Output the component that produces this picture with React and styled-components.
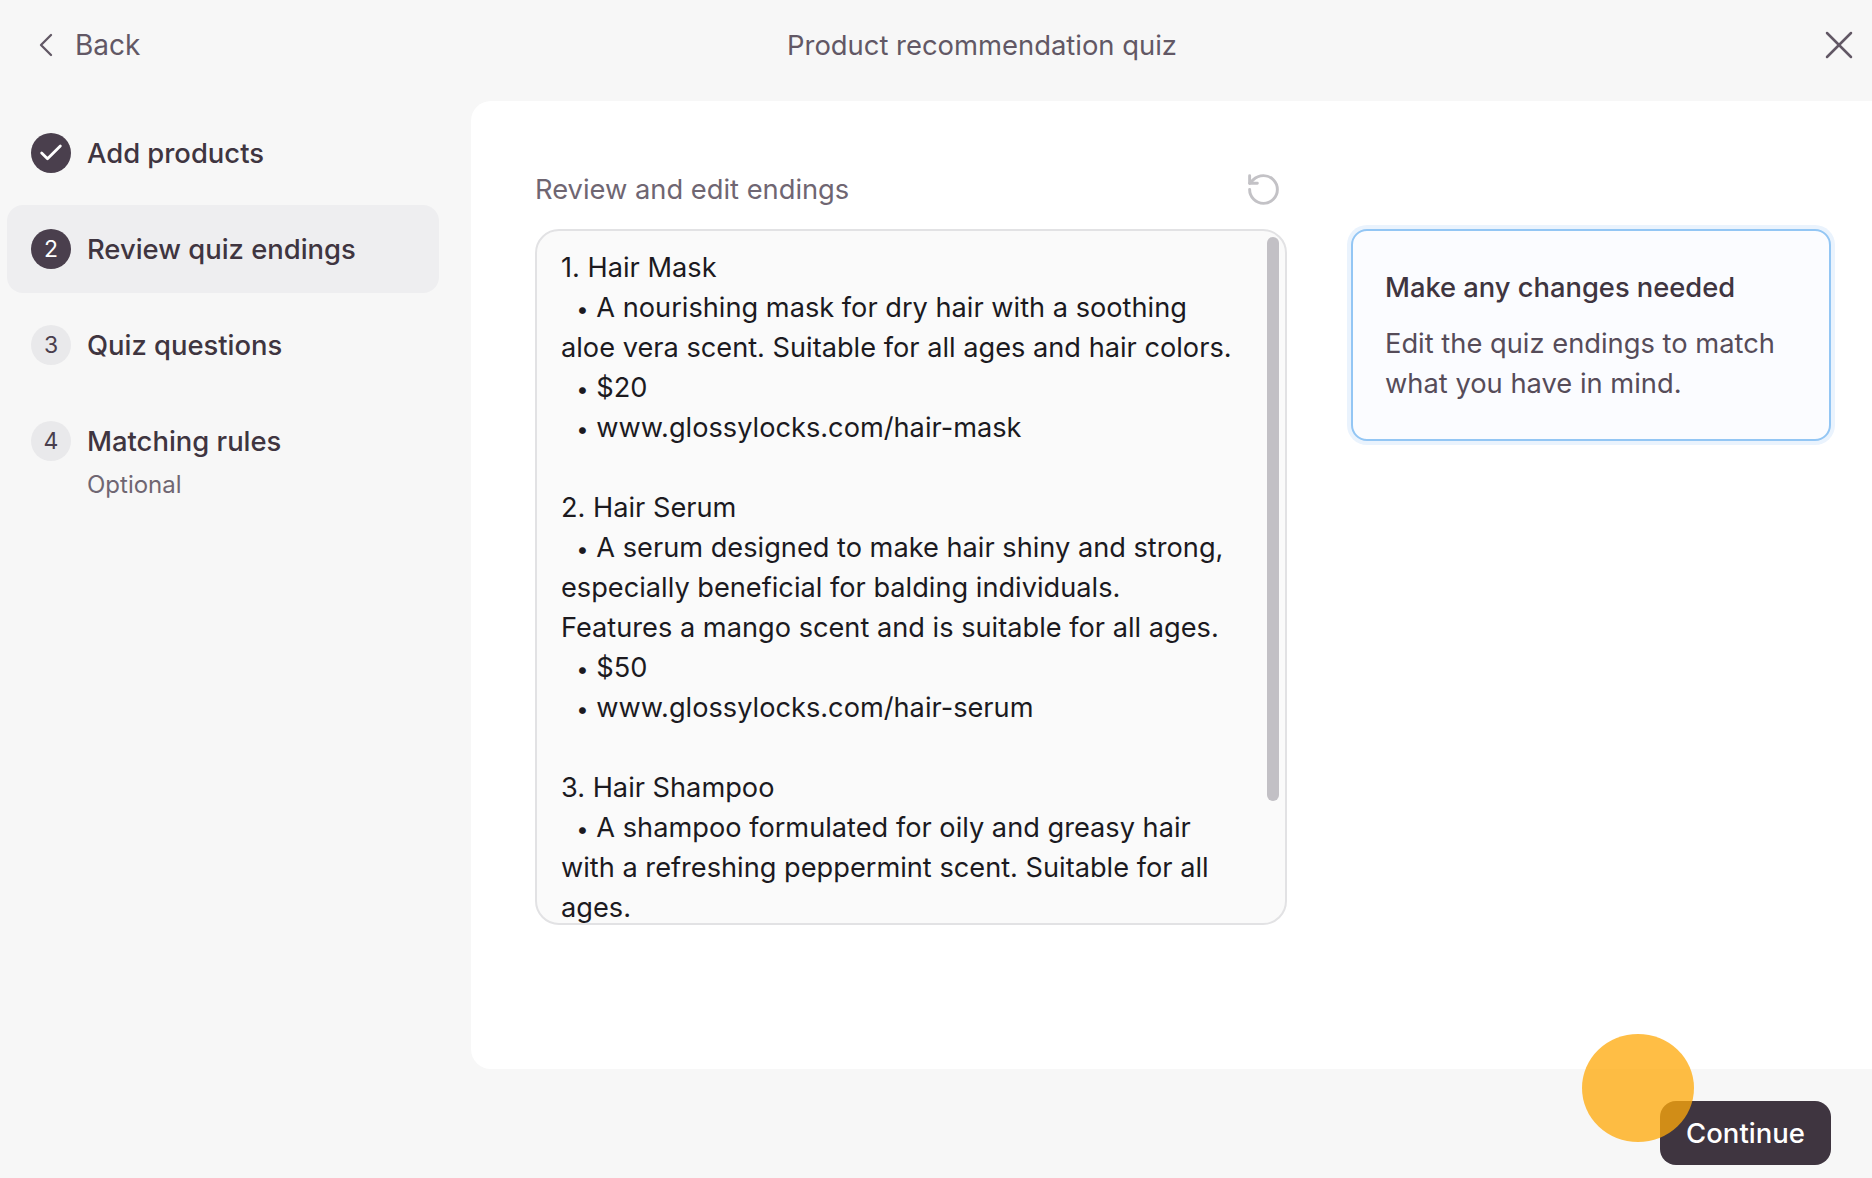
import React from 'react';
import styled, { createGlobalStyle } from 'styled-components';
import { Check, ChevronLeft, RotateCcw, X } from 'lucide-react';

const GlobalStyle = createGlobalStyle`
  html, body {
    margin: 0;
    padding: 0;
    background: #f7f7f7;
  }
  * {
    box-sizing: border-box;
  }
`;

const Page = styled.div`
  position: relative;
  width: 1872px;
  height: 1178px;
  overflow: hidden;
  display: grid;
  grid-template-columns: 471px 1fr;
  grid-template-rows: 101px 968px 109px;
  font-family: Inter, "Liberation Sans", sans-serif;
  color: #3f3540;
`;

const Header = styled.header`
  grid-column: 1 / 3;
  display: grid;
  grid-template-columns: 1fr 390px 686px;
  align-items: center;
  padding: 0 9px 11px 26px;
`;

const BackLink = styled.a`
  display: flex;
  align-items: center;
  gap: 9px;
  font-size: 28px;
  color: #625865;
`;

const Title = styled.div`
  font-size: 27.4px;
  color: #625865;
  text-align: center;
  white-space: nowrap;
`;

const CloseBtn = styled.button`
  justify-self: end;
  display: flex;
  padding: 0;
  border: 0;
  background: none;
  color: #625865;
`;

const Sidebar = styled.nav`
  display: flex;
  flex-direction: column;
  gap: 8px;
  padding: 8px 32px 0 7px;
`;

const Step = styled.div`
  display: flex;
  gap: 16px;
  padding: 24px;
  height: 88px;
  border-radius: 16px;
  background: ${props => (props.$active ? '#eeeef0' : 'transparent')};
`;

const Badge = styled.div`
  flex: none;
  width: 40px;
  height: 40px;
  border-radius: 50%;
  display: flex;
  align-items: center;
  justify-content: center;
  font-size: 23px;
  background: ${props => (props.$done ? '#4a3f4d' : '#e9e9eb')};
  color: ${props => (props.$done ? '#fff' : '#4a3f4d')};
`;

const StepLabel = styled.div`
  font-size: 27.4px;
  line-height: 40px;
  font-weight: 450;
  color: #3f3540;
  white-space: nowrap;
`;

const StepHint = styled.div`
  margin-top: 8px;
  font-size: 24px;
  line-height: 32px;
  color: #6f6672;
`;

const Panel = styled.main`
  background: #fff;
  border-radius: 20px 0 0 20px;
  display: grid;
  grid-template-columns: 752px 480px;
  column-gap: 64px;
  grid-template-rows: 128px 696px;
  padding-left: 64px;
`;

const FieldHead = styled.div`
  display: flex;
  align-items: flex-end;
  justify-content: space-between;
  padding: 0 5px 19px 0;
`;

const FieldLabel = styled.div`
  font-size: 27.3px;
  line-height: 40px;
  color: #6f6672;
`;

const ResetIcon = styled.span`
  display: flex;
  margin-bottom: 2px;
  color: #c3c2c6;
`;

const Editor = styled.div`
  position: relative;
  grid-row: 2;
  height: 696px;
  overflow: hidden;
  padding: 17px 49px 0 24px;
  border: 2px solid #e2e2e4;
  border-radius: 24px;
  background: #fafafa;
  font-size: 27.2px;
  line-height: 40px;
  color: #1c1a1f;
`;

const Line = styled.div`
  min-height: 40px;
  white-space: pre-wrap;
`;

const Bullet = styled.span`
  font-size: 22px;
  line-height: 0;
`;

const Thumb = styled.div`
  position: absolute;
  top: 6px;
  right: 6px;
  width: 12px;
  height: 564px;
  border-radius: 6px;
  background: #c2c0c5;
`;

const Callout = styled.aside`
  grid-row: 2;
  grid-column: 2;
  align-self: start;
  height: 212px;
  padding: 37px 32px 0;
  border: 2px solid #93c6f4;
  border-radius: 16px;
  background: #fbfcff;
  box-shadow: 0 0 0 4px #eaf3fd;
`;

const CalloutTitle = styled.div`
  font-size: 27.3px;
  line-height: 40px;
  font-weight: 450;
  color: #3f3540;
`;

const CalloutText = styled.div`
  margin-top: 16px;
  font-size: 27.3px;
  line-height: 40px;
  color: #564c59;
`;

const Footer = styled.footer`
  grid-column: 2;
  display: flex;
  justify-content: flex-end;
  padding: 32px 41px 0 0;
`;

const ContinueBtn = styled.button`
  width: 171px;
  height: 64px;
  padding: 0;
  border: 0;
  border-radius: 16px;
  background: #3f3540;
  color: #fff;
  font-family: inherit;
  font-size: 27.5px;
  font-weight: 450;
`;

const Pointer = styled.div`
  position: absolute;
  left: 1582px;
  top: 1034px;
  width: 112px;
  height: 108px;
  border-radius: 50%;
  background: rgba(255, 169, 10, 0.76);
`;

const endings = [
  '1. Hair Mask',
  '•A nourishing mask for dry hair with a soothing aloe vera scent. Suitable for all ages and hair colors.',
  '•$20',
  '•www.glossylocks.com/hair-mask',
  '',
  '2. Hair Serum',
  '•A serum designed to make hair shiny and strong, especially beneficial for balding individuals. Features a mango scent and is suitable for all ages.',
  '•$50',
  '•www.glossylocks.com/hair-serum',
  '',
  '3. Hair Shampoo',
  '•A shampoo formulated for oily and greasy hair with a refreshing peppermint scent. Suitable for all ages.',
];

export default function App() {
  return (
    <Page>
      <GlobalStyle />
      <Header>
        <BackLink>
          <ChevronLeft size={40} strokeWidth={1.4} />
          Back
        </BackLink>
        <Title>Product recommendation quiz</Title>
        <CloseBtn>
          <X size={48} strokeWidth={1.25} />
        </CloseBtn>
      </Header>
      <Sidebar>
        <Step>
          <Badge $done><Check size={28} strokeWidth={2.4} /></Badge>
          <StepLabel>Add products</StepLabel>
        </Step>
        <Step $active>
          <Badge $done>2</Badge>
          <StepLabel>Review quiz endings</StepLabel>
        </Step>
        <Step>
          <Badge>3</Badge>
          <StepLabel>Quiz questions</StepLabel>
        </Step>
        <Step>
          <Badge>4</Badge>
          <div>
            <StepLabel>Matching rules</StepLabel>
            <StepHint>Optional</StepHint>
          </div>
        </Step>
      </Sidebar>
      <Panel>
        <FieldHead>
          <FieldLabel>Review and edit endings</FieldLabel>
          <ResetIcon><RotateCcw size={37} strokeWidth={1.9} /></ResetIcon>
        </FieldHead>
        <Editor>
          {endings.map((line, i) => (
            <Line key={i}>
              {line.startsWith('•') ? (
                <>
                  {'  '}<Bullet>•</Bullet>{' '}{line.slice(1)}
                </>
              ) : line}
            </Line>
          ))}
          <Thumb />
        </Editor>
        <Callout>
          <CalloutTitle>Make any changes needed</CalloutTitle>
          <CalloutText>Edit the quiz endings to match what you have in mind.</CalloutText>
        </Callout>
      </Panel>
      <Footer>
        <ContinueBtn>Continue</ContinueBtn>
      </Footer>
      <Pointer />
    </Page>
  );
}
